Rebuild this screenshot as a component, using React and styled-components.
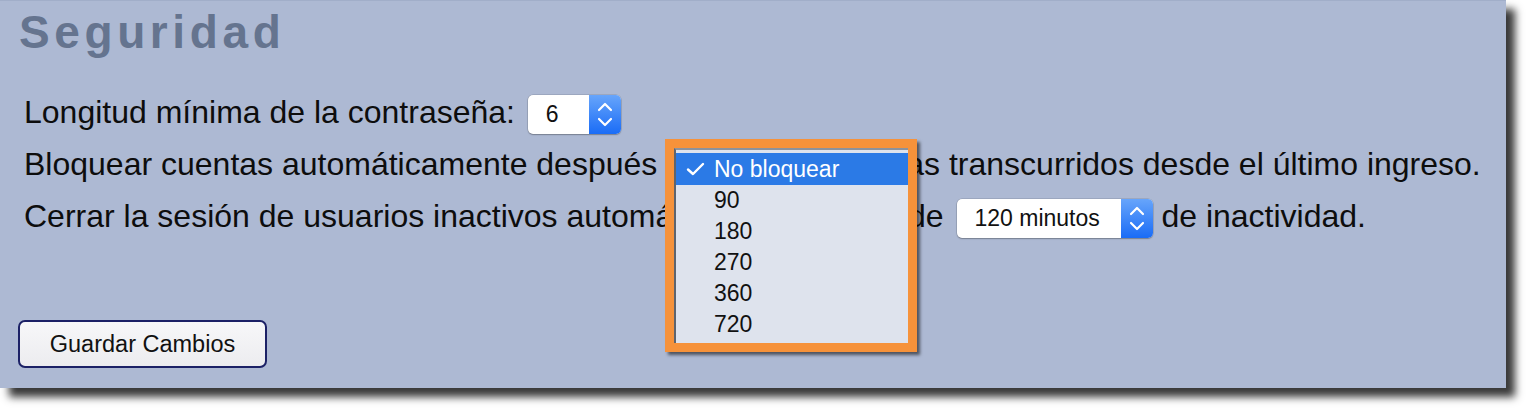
import React from "react";
import styled, { createGlobalStyle } from "styled-components";

const GlobalStyle = createGlobalStyle`
  body {
    margin: 0;
    background: #fff;
    font-family: "Liberation Sans", Arial, Helvetica, sans-serif;
  }
`;

const lockOptions = ["No bloquear", "90", "180", "270", "360", "720"];

function Stepper() {
  return (
    <StepBox>
      <svg width="32" height="39" viewBox="0 0 32 39">
        <path d="M10 15 L16 9 L22 15" fill="none" stroke="#fff" strokeWidth="2.2" strokeLinecap="round" strokeLinejoin="round" />
        <path d="M10 24 L16 30 L22 24" fill="none" stroke="#fff" strokeWidth="2.2" strokeLinecap="round" strokeLinejoin="round" />
      </svg>
    </StepBox>
  );
}

function Select({ value, width }) {
  return (
    <SelectBox $width={width}>
      <SelectValue>{value}</SelectValue>
      <Stepper />
    </SelectBox>
  );
}

function Check() {
  return (
    <CheckMark>
      <svg width="20" height="16" viewBox="0 0 20 16">
        <path d="M2 8.5 L7 13 L17 3" fill="none" stroke="#fff" strokeWidth="2.4" strokeLinecap="round" strokeLinejoin="round" />
      </svg>
    </CheckMark>
  );
}

export default function App() {
  return (
    <Page>
      <GlobalStyle />
      <Panel>
        <Title>Seguridad</Title>
        <Line>
          Longitud mínima de la contraseña: <Select value="6" width={93} />
        </Line>
        <Line>
          Bloquear cuentas automáticamente después de{" "}
          <Select value="No bloquear" width={156} /> días transcurridos desde el último ingreso.
        </Line>
        <Line>
          Cerrar la sesión de usuarios inactivos automáticamente luego de{" "}
          <Select value="120 minutos" width={196} /> de inactividad.
        </Line>
        <SaveButton>Guardar Cambios</SaveButton>

        <Callout>
          <Menu>
            {lockOptions.map((opt, i) => (
              <MenuItem key={opt} $active={i === 0}>
                {i === 0 && <Check />}
                {opt}
              </MenuItem>
            ))}
          </Menu>
        </Callout>
      </Panel>
    </Page>
  );
}

const Page = styled.div`
  width: 1526px;
  height: 408px;
  overflow: hidden;
  background: #fff;
`;

const Panel = styled.div`
  position: relative;
  box-sizing: border-box;
  width: 1506px;
  height: 388px;
  padding: 5px 0 0 18px;
  background: #adb9d3;
  border-top: 1px solid #a1aec9;
  box-shadow: 9px 9px 8px rgba(0, 0, 0, 0.78);
`;

const Title = styled.h2`
  margin: 0 0 28px 1px;
  font-size: 46px;
  line-height: 52px;
  font-weight: bold;
  letter-spacing: 4.6px;
  color: #65748f;
`;

const Line = styled.div`
  padding-left: 6px;
  font-size: 32px;
  line-height: 52px;
  color: #0d0d0d;
  white-space: nowrap;
`;

const SelectBox = styled.span`
  display: inline-flex;
  vertical-align: middle;
  box-sizing: border-box;
  width: ${(p) => p.$width}px;
  height: 39px;
  margin-left: 4px;
  background: #fff;
  border-radius: 5px;
  overflow: hidden;
  box-shadow: 0 0 0 0.5px rgba(0, 0, 0, 0.18), 0 1px 1.5px rgba(0, 0, 0, 0.25);
`;

const SelectValue = styled.span`
  flex: 1;
  padding-left: 18px;
  font-size: 23px;
  line-height: 39px;
  color: #111;
`;

const StepBox = styled.span`
  display: flex;
  width: 32px;
  height: 39px;
  background: linear-gradient(to bottom, #67a5fb, #1a6cf6);
`;

const SaveButton = styled.button`
  display: block;
  box-sizing: border-box;
  margin-top: 78px;
  width: 249px;
  height: 48px;
  border: 2px solid #1c2166;
  border-radius: 7px;
  background: linear-gradient(to bottom, #f7f7f9, #ececef);
  font-family: "Liberation Sans", Arial, sans-serif;
  font-size: 23.5px;
  color: #111;
  padding: 0;
`;

const Callout = styled.div`
  position: absolute;
  left: 665px;
  top: 138px;
  box-sizing: border-box;
  width: 252px;
  height: 213px;
  border: 9px solid #f6923a;
  box-shadow: 3px 3px 3px rgba(0, 0, 0, 0.55);
`;

const Menu = styled.div`
  box-sizing: border-box;
  height: 100%;
  padding: 3px 0 2px;
  background: #dee3ed;
  border-top: 2px solid #8c929c;
  border-left: 2px solid #5f646d;
`;

const MenuItem = styled.div`
  position: relative;
  height: ${(p) => (p.$active ? 32 : 31)}px;
  padding-left: 38px;
  font-size: 23px;
  line-height: ${(p) => (p.$active ? 32 : 31)}px;
  color: ${(p) => (p.$active ? "#fff" : "#111")};
  background: ${(p) => (p.$active ? "#2b7ae6" : "transparent")};
`;

const CheckMark = styled.span`
  position: absolute;
  left: 10px;
  top: 8px;
  display: flex;
`;
